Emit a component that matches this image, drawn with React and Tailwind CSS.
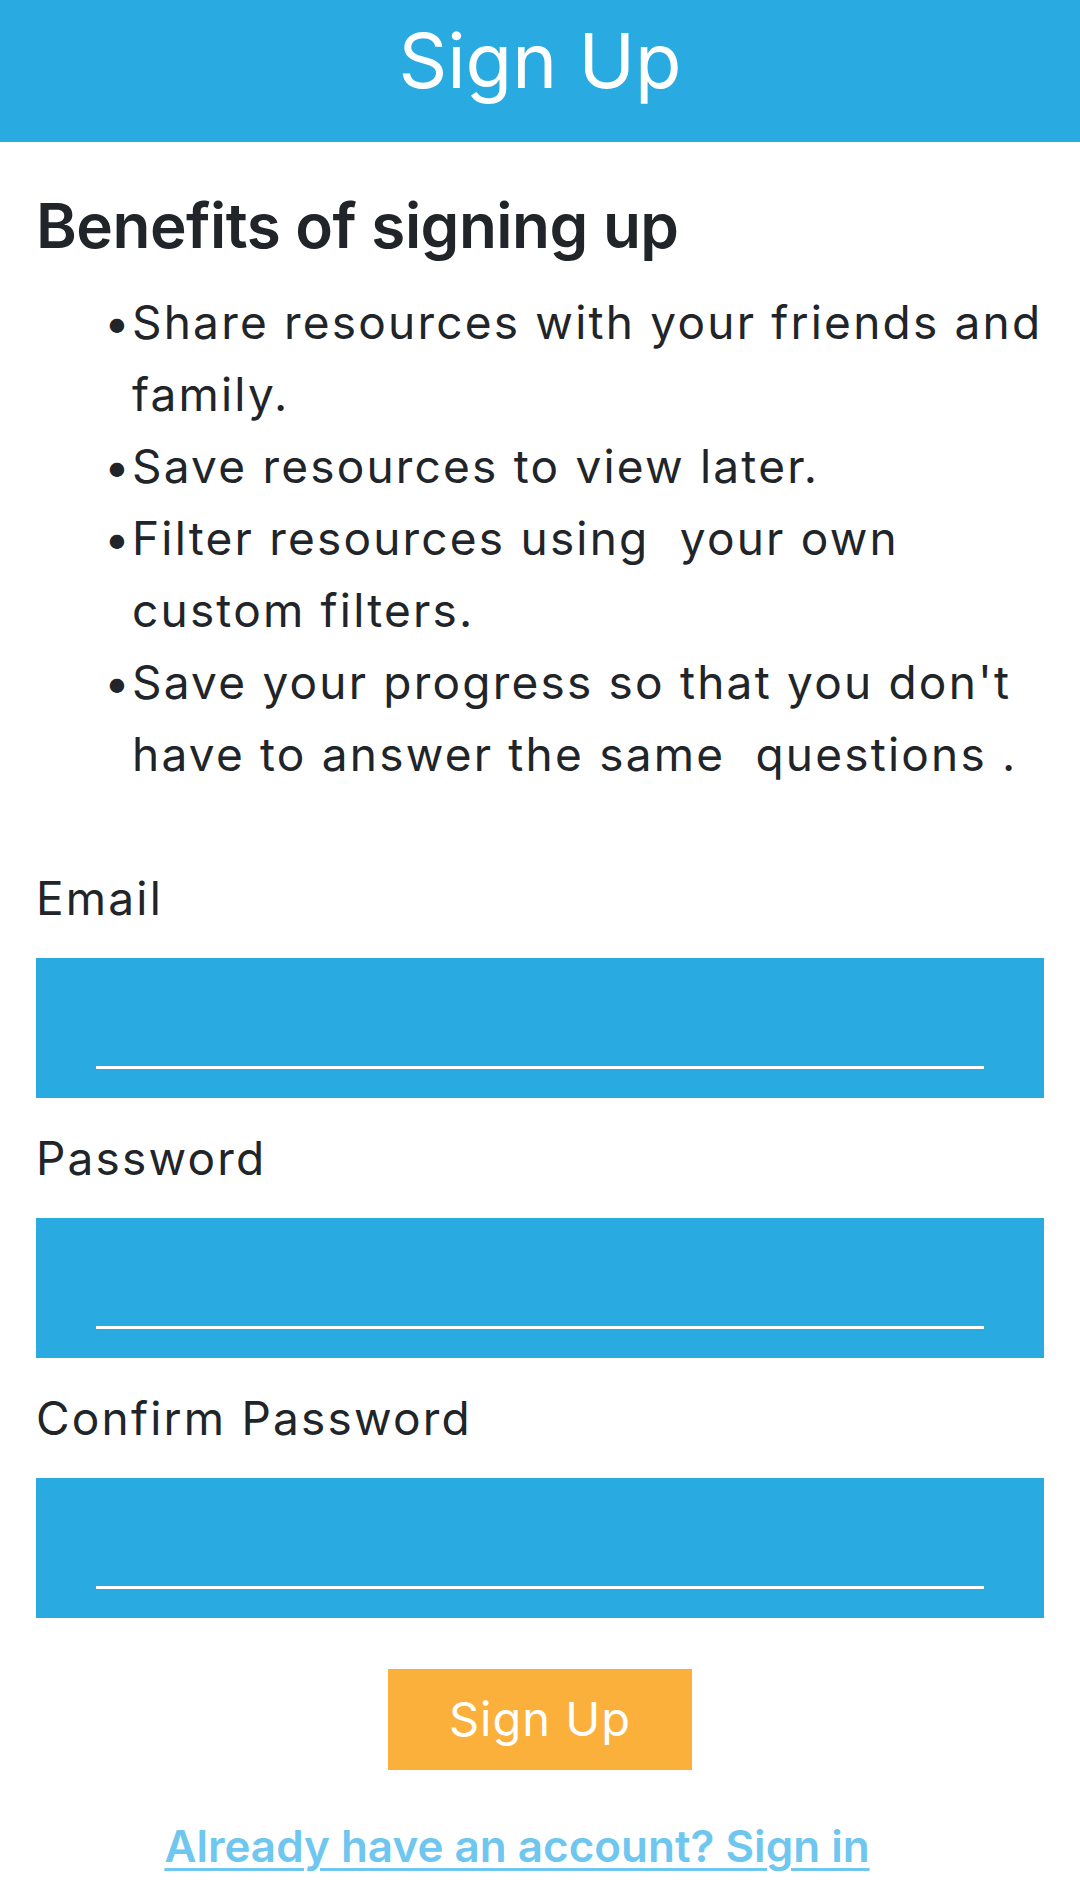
import React, { useState } from 'react';

const benefits = [
  ['Share resources with your friends and', 'family.'],
  ['Save resources to view later.'],
  ['Filter resources using  your own', 'custom filters.'],
  ["Save your progress so that you don't", 'have to answer the same  questions .'],
];

function Field({ label, type, value, onChange }) {
  return (
    <div className="flex flex-col">
      <label className="text-[46px] leading-[60px] text-[#212529] tracking-[2.2px]">{label}</label>
      <div className="mt-[30px] h-[140px] bg-[#29abe2] px-[60px] pb-[29px] flex items-end">
        <input
          type={type}
          value={value}
          onChange={(e) => onChange(e.target.value)}
          className="w-full bg-transparent border-0 border-b-[3px] border-white outline-none text-white text-[40px] pb-1"
        />
      </div>
    </div>
  );
}

function App() {
  const [email, setEmail] = useState('');
  const [password, setPassword] = useState('');
  const [confirm, setConfirm] = useState('');

  return (
    <div className="min-h-screen bg-white font-['Inter','Noto_Sans',sans-serif]">
      <header className="h-[142px] bg-[#29abe2] text-white text-center text-[76px] leading-[121px]">
        Sign Up
      </header>

      <main className="px-[36px]">
        <h2 className="mt-[44px] text-[62px] leading-[80px] font-semibold text-[#212529] tracking-[-0.5px]">
          Benefits of signing up
        </h2>

        <ul className="mt-[20px] pl-[68px] text-[46px] leading-[72px] text-[#212529] tracking-[2.2px]">
          {benefits.map((lines, i) => (
            <li key={i} className="flex">
              <span className="w-[28px] shrink-0">•</span>
              <span className="whitespace-pre">
                {lines.map((l, j) => (
                  <React.Fragment key={j}>
                    {j > 0 && <br />}
                    {l}
                  </React.Fragment>
                ))}
              </span>
            </li>
          ))}
        </ul>

        <form className="mt-[78px] flex flex-col gap-[30px]" onSubmit={(e) => e.preventDefault()}>
          <Field label="Email" type="email" value={email} onChange={setEmail} />
          <Field label="Password" type="password" value={password} onChange={setPassword} />
          <Field label="Confirm Password" type="password" value={confirm} onChange={setConfirm} />
          <button
            type="submit"
            className="mx-auto mt-[21px] w-[304px] h-[101px] bg-[#fbb03b] text-white text-[47px] tracking-[1px]"
          >
            Sign  Up
          </button>
        </form>

        <div className="mt-[46px] pr-[46px] text-center">
          <a href="#" className="text-[44px] leading-[60px] font-semibold text-[#6fc6ee] underline underline-offset-[6px] decoration-[3px]">
            Already have an account? Sign in
          </a>
        </div>
      </main>
    </div>
  );
}

export default App;
